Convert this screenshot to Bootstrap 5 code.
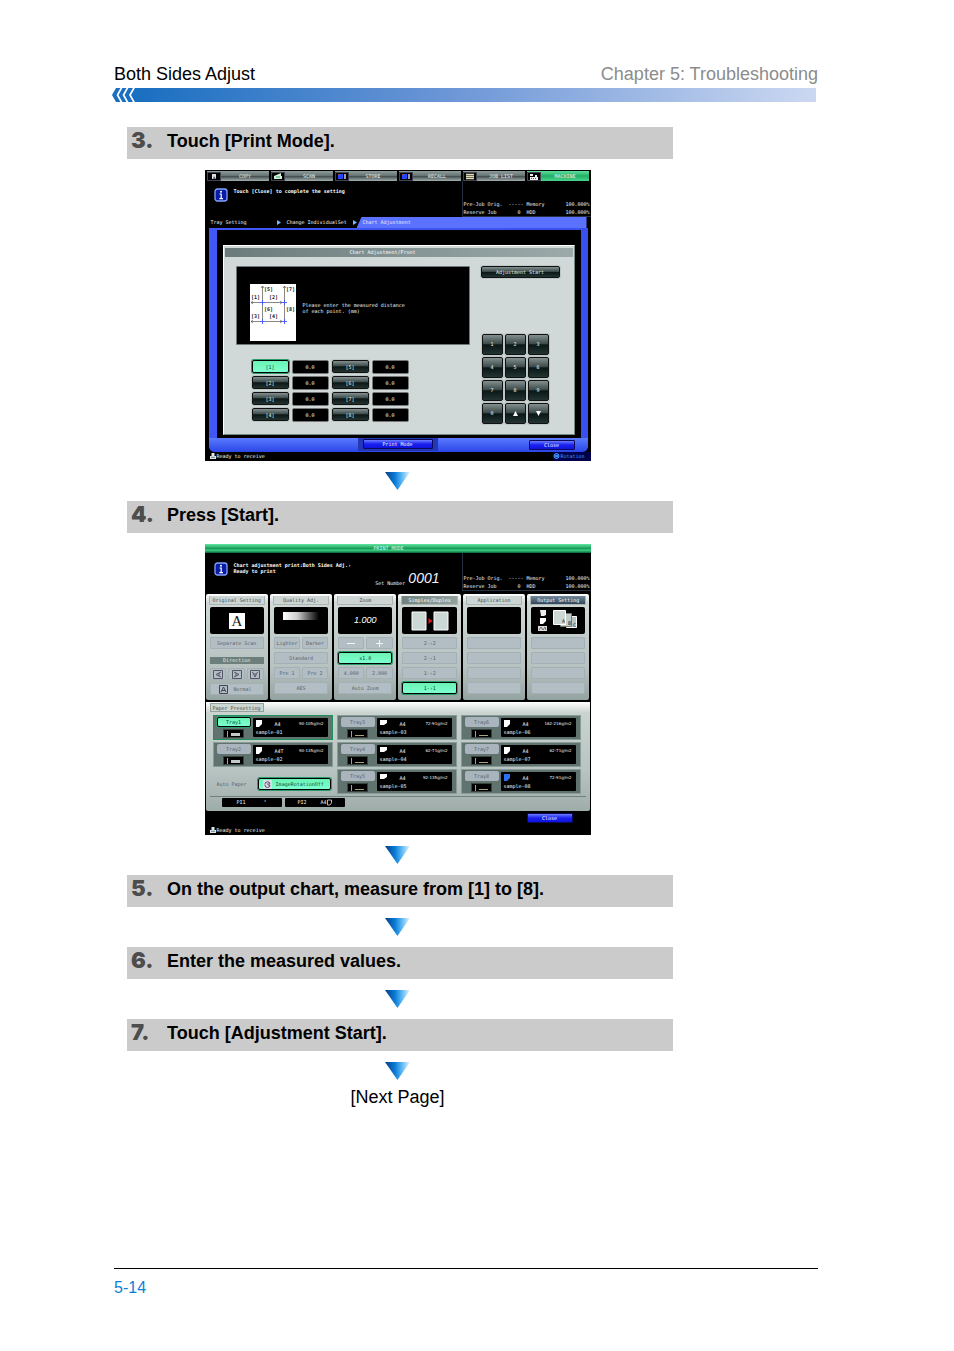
<!DOCTYPE html>
<html lang="en">
<head>
<meta charset="utf-8">
<meta name="viewport" content="width=device-width, initial-scale=1">
<title>Both Sides Adjust</title>
<link rel="stylesheet" href="https://cdn.jsdelivr.net/npm/bootstrap@5.3.0/dist/css/bootstrap.min.css">
<script src="https://cdn.jsdelivr.net/npm/bootstrap@5.3.0/dist/js/bootstrap.bundle.min.js"></script>
<style>
body{font-family:"Liberation Sans",Arial,sans-serif;font-size:18px;line-height:20px;color:#000;background:#fff}
.sheet{padding:64px 136px 0 114px;min-height:100vh}
.chapter{color:#8c8c8c}
.rule-bar{height:14px;margin:4px 2px 25px -2px}
.rule-bar .fade-bar{background:linear-gradient(90deg,#1a6fc1,#6a95d6 45%,#ccd8f1)}
.steps{margin:0 0 0 13px;max-width:546px}
.step-head{background:#cbcbcb;height:32px;font-size:18px;font-weight:700;line-height:29px;padding-left:4px}
.step-no{font-family:Inter,sans-serif;font-weight:900;font-size:22px;line-height:26px;width:36px;color:#4d4d4d}
.mid{padding-right:5px}
.arrow{height:18px;margin:11px 0}
.next{margin-top:-4px}
.foot{border-top:1px solid #000;color:#0a7fd4;font-size:16px;line-height:18px;padding:10px 0 54px}
/* device screens */
.scr{width:386px;background:#000;color:#f2f6f6;font:5px/8px "DejaVu Sans Mono","Liberation Mono",monospace;margin:11px 0 0;white-space:nowrap}
.scr button{font:inherit;color:inherit;border:0;padding:0;margin:0;text-align:center;display:block}
.scr svg{display:block;flex:none}
.tabs{height:11px;padding:1px 2px 0 2px;gap:2px}
.tabs button{flex:1 1 0;height:10px;display:flex;align-items:center;background:linear-gradient(#8f9c9c,#677474 45%,#3b4646 50%,#a3afaf);color:#e6eded}
.tabs button.on{background:linear-gradient(#5ee09a,#24ad68 50%,#49d68c)}
.tabs i{width:14px;height:9px;background:#000;border:1px solid #445;margin-right:1px;display:flex;justify-content:center}
.tabs b{flex:1;font-weight:400}
.info{height:36px;padding-left:9px}
.info.tall{height:38px}
.info>svg{margin-top:7px}
.tall>svg,.info.tall .msg{margin-top:9px}
.msg{margin:7px 0 0 6px;color:#fff;font-weight:700;line-height:6px}
.stat{width:129px;border-left:1px solid #273040;border-bottom:1px solid #273040;padding:0 1px;align-content:end;grid-template-columns:45px 12px 6px 30px 33px;line-height:8px}
.crumbs{height:11px;line-height:11px;padding-left:6px}
.crumb{width:66px}
.crumb-on{background:#5a72ff;color:#e9edff;clip-path:polygon(5px 0,100% 0,100% 100%,0 100%);margin-right:4px;padding-left:6px}
.frame{margin:0 3px 0 4px;background:linear-gradient(90deg,#4058f5,#3a50ee);padding:2px 7px 0 8px;border-radius:0 0 6px 6px}
.inner{background:#000;padding:15px 6px 3px}
.gray{background:#d0d9d8;border:1px solid #fff;border-right-color:#788;border-bottom-color:#788;height:190px;padding:2px 1px}
.ttl{height:9px;line-height:9px;background:linear-gradient(90deg,#6b7b7b,#9caaaa);color:#fff;text-align:center;padding-right:32px}
.area{padding:9px 13px 0 11px}
.left-col{width:234px}
.dark-box{background:#000;border:1px solid #6d7979;border-radius:1px;height:79px;padding:17px 0 0 13px}
.hint{padding:18px 0 0 7px;line-height:6px}
.scr .key{background:linear-gradient(#83908f,#3d4b4b 45%,#0a1716 52%,#223433);border:1px solid #111;border-radius:2px;color:#f0f6f6;box-shadow:0 0 0 1px #87939344}
.key.start{width:79px;height:12px;line-height:10px}
.pts{display:grid;grid-template-columns:37px 37px 37px 37px;column-gap:3px;row-gap:2px;margin:15px 0 0 16px}
.pts>*{height:14px;line-height:12px}
.pts .key,.pts .lit{height:13px}
.pts output{background:#000;border:1px solid #777;border-radius:2px;text-align:center;display:block}
.scr .lit{background:linear-gradient(#6bf3b4,#7dffd0);color:#0b4a32;border:1px solid #000;box-shadow:0 0 0 1px #2b9c6a;border-radius:2px}
.pad{display:grid;grid-template-columns:repeat(3,21px);gap:2px;margin:56px 0 0 1px}
.pad button{height:21px;line-height:19px}
.btm{margin:0 -7px 0 -8px;height:14px;padding:0 13px 0 149px;background:linear-gradient(#5a7bff,#2b45e8);border-radius:0 0 6px 6px}
.well{background:#2337b8;padding:1px 5px 0;height:13px}
.scr .bbtn{background:linear-gradient(#6b7dff,#1a20ef 50%,#1113dc);border:1px solid #0a0a58;border-radius:1px;color:#fff;height:10px;line-height:8px;width:46px}
.scr .bbtn.wide{width:70px}
.btm>.bbtn{margin-top:1px}
.ready{height:9px;padding-left:5px;line-height:8px}
.rotn{background:#00004c;color:#3fa0ff;padding-right:6px}
/* print mode */
.green{height:9px;line-height:9px;text-align:center;padding-right:18px;background:linear-gradient(#5fe8a2,#1b9a58 50%,#36cf80 70%,#0b5e33);color:#dcfbe9;padding-right:18px}
.cols{display:grid;grid-template-columns:repeat(6,1fr);gap:2px;padding:3px 1px 2px}
.colx{background:linear-gradient(#fff,#cfd8d5 8%,#b6c2c0 70%,#93a3a0);height:106px;padding:2px 4px 0;color:#59646a;border-radius:2px}
.colx .lab{height:9px;line-height:9px;margin:0 -1px 2px;text-align:center;background:#ccd5d3;border:1px solid #aab5b4;border-width:0 1px 1px;color:#3d494b}
.colx .lab.dk{background:linear-gradient(90deg,#71837f,#93a19d);color:#fff}
.colx .lab.nv{background:linear-gradient(#73899a,#31465a);color:#fff}
.view{height:27px;background:#000;border-radius:2px;margin-bottom:3px;display:flex;align-items:center;justify-content:center}
.ratio-no{font:italic 9px/9px "Liberation Sans",sans-serif;color:#fff}
.scr .soft{background:#b3bdc4;border-radius:1px;height:12px;line-height:10px;flex:1;width:100%;border:1px solid #a5b0b6}
.soft.nrm{padding-left:8px;gap:6px}
.colx .lit{height:12px;line-height:10px;width:100%}
.rowx{display:flex;gap:2px;margin-bottom:3px}
.dirbar{height:7px;line-height:7px;background:#6d7f7a;color:#e0e9e6;text-align:center;margin:8px 0 4px}
.paper{margin:0 1px;height:109px;background:linear-gradient(#fff,#c9d3d0 10%,#b9c5c2 60%,#9fadaa);padding:1px 4px 0;border-radius:0 0 2px 2px}
.ptab{width:54px;height:9px;line-height:8px;border:1px solid #93a09e;background:#ccd6d3;color:#3d494b;text-align:center}
.trays{display:grid;grid-template-columns:repeat(3,120px);grid-auto-rows:25px;column-gap:4px;row-gap:2px;padding:3px 0 0 3px}
.tray{background:#60736e;border:1px solid #8a9a96;padding:1px 4px 1px 3px;display:flex;justify-content:space-between}
.tray.sel{border-color:#1f8f5d}
.tray button{width:34px;height:10px;line-height:10px;background:#aab4bd;border-radius:2px}
.scr .tray button:not(.lit){color:#59646e}
.tray button.lit{line-height:8px}
.stock{width:21px;height:9px;background:#000;border:1px solid #39443f;margin:2px auto 0;padding:0 3px 0 3px;display:flex;align-items:flex-end;gap:3px}
.stock:before{content:"";width:1px;height:6px;background:#a8a480}
.stock i{flex:1;height:1px;background:#a8a480;margin-bottom:1px}
.stock i.full{height:3px;background:#c4c9c9}
.sheetbox{width:75px;height:19px;background:#000;padding:2px 4px 0 3px;border-radius:1px;line-height:8px;margin-top:1px}
.sheetbox small{font-size:4px;font-family:"DejaVu Sans",sans-serif;margin-left:auto}
.sheetbox em{font-style:normal;margin-left:13px}
.auto{display:flex;align-items:center;color:#59646a;padding:6px 0 0 4px;height:24px}
.scr .rot{width:73px;height:12px;margin-left:11px;display:flex;align-items:center;gap:4px;padding:0 4px}
.pi{border-top:1px solid #71807d;margin:2px 0 0;padding:1px 0 0 12px;display:flex;gap:3px}
.pi span{background:#000;width:60px;height:9px;line-height:9px;padding:0 6px;display:flex;justify-content:space-around;border-radius:1px}
.setno{padding-top:18px;line-height:8px}
.digits{font:italic 14px/14px "Liberation Sans",sans-serif;color:#f0f4ff;margin:0 22px 0 3px}
.closing{height:15px;padding:2px 18px 0 0}
</style>
</head>
<body>
<svg width="0" height="0" class="position-absolute" aria-hidden="true">
 <defs>
  <linearGradient id="ga" x1="0" y1="0" x2="1" y2="0"><stop offset="0" stop-color="#063f86"/><stop offset=".4" stop-color="#0b7bd8"/><stop offset=".65" stop-color="#52b4f2"/><stop offset="1" stop-color="#e6f5ff"/></linearGradient>
  <linearGradient id="gs" x1="0" x2="1"><stop offset="0" stop-color="#fff"/><stop offset=".4" stop-color="#ccc"/><stop offset="1" stop-color="#000"/></linearGradient>
  <symbol id="down" viewBox="0 0 25 18"><path d="M0 0H25L12.500 18Z" fill="url(#ga)"/></symbol>
  <symbol id="inf" viewBox="0 0 14 14"><rect x="1" y="1" width="12" height="12" rx="2.500" fill="#0a1ba8" stroke="#86a4ff" stroke-width="1.300"/><circle cx="7" cy="3.800" r="1" fill="#fff"/><path d="M5.500 6H7.200V10.500M5.300 10.700H9" fill="none" stroke="#fff" stroke-width="1.200"/></symbol>
  <symbol id="prn" viewBox="0 0 6 6"><path d="M1.500 0H4.500V3H6V6H0V3H1.500Z" fill="#dfe6e6"/><path d="M1 4.300H5" stroke="#333" stroke-width=".6"/></symbol>
  <symbol id="pg" viewBox="0 0 6 7"><path d="M0 0H6V4L3 7H0Z"/></symbol>
  <symbol id="pgl" viewBox="0 0 7 6"><path d="M0 0H7V3L4 5H0Z"/></symbol>
 </defs>
</svg>
<div class="sheet d-flex flex-column">
 <header>
  <div class="d-flex justify-content-between"><span>Both Sides Adjust</span><span class="chapter">Chapter 5: Troubleshooting</span></div>
  <div class="rule-bar d-flex"><svg width="25" height="14" viewBox="0 0 25 14"><path d="M4 0H25V14H4L0 7Z" fill="#1a6fc1"/><path d="M10 -1L5.500 7L10 15M16 -1L11.500 7L16 15M22.500 -1L18 7L22.500 15" fill="none" stroke="#fff" stroke-width="1.700"/></svg><div class="fade-bar flex-fill"></div></div>
 </header>
 <main class="steps">
  <div class="step-head d-flex"><span class="step-no">3.</span><span>Touch [Print Mode].</span></div>
  <div class="mid d-flex flex-column align-items-center">
   <figure class="scr">
    <div class="tabs d-flex">
     <button><i><svg width="10" height="8"><path d="M3 1H7V6H3Z" fill="#dde"/><path d="M5 3L7 6H4Z" fill="#567"/></svg></i><b>COPY</b></button>
     <button><i><svg width="10" height="8"><path d="M1 3L8 0V3H9V6H1Z" fill="#d7efdd"/><path d="M3 4H7" stroke="#3a6"/></svg></i><b>SCAN</b></button>
     <button><i><svg width="10" height="8"><path d="M1 1H6V6H1Z" fill="#2545ff"/><path d="M7 1H9V6H7Z" fill="#99a"/><path d="M1 1H3V2H1Z" fill="#d33"/></svg></i><b>STORE</b></button>
     <button><i><svg width="10" height="8"><path d="M1 1H6V6H1Z" fill="#2545ff"/><path d="M7 1H9V6H7Z" fill="#99a"/><path d="M1 1H3V2H1Z" fill="#d33"/></svg></i><b>RECALL</b></button>
     <button><i><svg width="10" height="8"><path d="M1 1.500H9M1 3.500H9M1 5.500H9" stroke="#dedfb8" stroke-width="1.300"/></svg></i><b>JOB LIST</b></button>
     <button class="on"><i><svg width="10" height="8"><path d="M1 1H4V3H1ZM1 4H9V7H1ZM6 2H8V4H6Z" fill="#eee"/><path d="M2 5.500H8" stroke="#555" stroke-dasharray="1 1"/></svg></i><b>MACHINE</b></button>
    </div>
    <div class="info d-flex"><svg width="14" height="14"><use href="#inf"/></svg>
     <div class="msg">Touch [Close] to complete the setting</div>
     <div class="stat d-grid ms-auto"><span>Pre-Job Orig.</span><span class="text-end">-----</span><span></span><span>Memory</span><span class="text-end">100.000%</span><span>Reserve Job</span><span class="text-end">0</span><span></span><span>HDD</span><span class="text-end">100.000%</span></div>
    </div>
    <div class="crumbs d-flex"><span class="crumb">Tray Setting</span><svg width="10" height="11"><path d="M0 3L4 5.500L0 8Z" fill="#7fb2ff"/></svg><span class="crumb">Change IndividualSet</span><svg width="4" height="11"><path d="M0 3L4 5.500L0 8Z" fill="#7fb2ff"/></svg><span class="crumb-on flex-fill">Chart Adjustment</span></div>
    <div class="frame">
     <div class="inner">
      <div class="gray">
       <div class="ttl">Chart Adjustment/Front</div>
       <div class="area d-flex justify-content-between">
        <div class="left-col">
         <div class="dark-box d-flex">
          <svg width="46" height="57" viewBox="0 0 46 57" font-size="5" font-weight="700" fill="#222"><rect width="46" height="57" fill="#fff"/><path d="M12.500 2V38M34.500 2V38M1 18.500H11M15 18.500H32M1 37.500H11M15 37.500H32M11 4L12.500 2L14 4M33 4L34.500 2L36 4M3 17L1 18.500L3 20M30 17L32 18.500L30 20M3 36L1 37.500L3 39M30 36L32 37.500L30 39" fill="none" stroke="#555" stroke-width=".7"/><path d="M10 18.500H15M12.500 16V21M32 18.500H37M34.500 16V21M10 37.500H15M12.500 35V40M32 37.500H37M34.500 35V40" stroke="#4155ff" stroke-width=".9"/><text x="14" y="7">[5]</text><text x="36" y="7">[7]</text><text x="1" y="15">[1]</text><text x="19" y="15">[2]</text><text x="14" y="27">[6]</text><text x="36" y="27">[8]</text><text x="1" y="34">[3]</text><text x="19" y="34">[4]</text></svg>
          <div class="hint">Please enter the measured distance<br>of each point. (mm)</div>
         </div>
         <div class="pts">
          <button class="lit">[1]</button><output>0.0</output><button class="key">[5]</button><output>0.0</output>
          <button class="key">[2]</button><output>0.0</output><button class="key">[6]</button><output>0.0</output>
          <button class="key">[3]</button><output>0.0</output><button class="key">[7]</button><output>0.0</output>
          <button class="key">[4]</button><output>0.0</output><button class="key">[8]</button><output>0.0</output>
         </div>
        </div>
        <div>
         <button class="key start">Adjustment Start</button>
         <div class="pad"><button class="key">1</button><button class="key">2</button><button class="key">3</button><button class="key">4</button><button class="key">5</button><button class="key">6</button><button class="key">7</button><button class="key">8</button><button class="key">9</button><button class="key">0</button><button class="key" aria-label="Up"><svg class="mx-auto" width="5" height="5"><path d="M2.500 0L5 5H0Z" fill="#fff"/></svg></button><button class="key" aria-label="Down"><svg class="mx-auto" width="5" height="5"><path d="M2.500 5L5 0H0Z" fill="#fff"/></svg></button></div>
        </div>
       </div>
      </div>
     </div>
     <div class="btm d-flex justify-content-between"><div class="well"><button class="bbtn wide">Print Mode</button></div><button class="bbtn mt-auto mb-auto">Close</button></div>
    </div>
    <div class="ready d-flex"><svg width="7" height="8"><use href="#prn" y="1" width="6" height="6"/></svg><span>Ready to receive</span><span class="rotn ms-auto d-flex"><svg width="7" height="8"><circle cx="3.500" cy="4" r="2.500" fill="#0b3b99" stroke="#3fa0ff"/><path d="M2 4H5" stroke="#9cf"/></svg>Rotation</span></div>
   </figure>
   <svg class="arrow" width="25" height="18"><use href="#down"/></svg>
  </div>

  <div class="step-head d-flex"><span class="step-no">4.</span><span>Press [Start].</span></div>
  <div class="mid d-flex flex-column align-items-center">
   <figure class="scr">
    <div class="green">PRINT MODE</div>
    <div class="info tall d-flex"><svg width="14" height="14"><use href="#inf"/></svg>
     <div class="msg">Chart adjustment print:Both Sides Adj.›<br>Ready to print</div>
     <div class="d-flex ms-auto setno"><span class="pt-2">Set Number</span><span class="digits">0001</span></div>
     <div class="stat d-grid"><span>Pre-Job Orig.</span><span class="text-end">-----</span><span></span><span>Memory</span><span class="text-end">100.000%</span><span>Reserve Job</span><span class="text-end">0</span><span></span><span>HDD</span><span class="text-end">100.000%</span></div>
    </div>
    <div class="cols">
     <div class="colx"><div class="lab">Original Setting</div><div class="view"><svg width="16" height="16"><rect width="16" height="16" fill="#fff"/><text x="8" y="13" font-family="Liberation Serif,serif" font-size="15" text-anchor="middle" fill="#222">A</text></svg></div>
      <div class="rowx"><button class="soft">Separate Scan</button></div>
      <div class="dirbar">Direction</div>
      <div class="rowx"><button class="soft" aria-label="Left"><svg class="mx-auto" width="10" height="9"><path d="M.5 .5H9.500V8.500H.5ZM8 2L3 4.500L8 7M6 3V6" fill="none" stroke="#556"/></svg></button><button class="soft" aria-label="Right"><svg class="mx-auto" width="10" height="9"><path d="M.5 .5H9.500V8.500H.5ZM2 2L7 4.500L2 7M4 3V6" fill="none" stroke="#556"/></svg></button><button class="soft" aria-label="Down"><svg class="mx-auto" width="10" height="9"><path d="M.5 .5H9.500V8.500H.5ZM2.500 2L5 7L7.500 2M4 4H6" fill="none" stroke="#556"/></svg></button></div>
      <button class="soft nrm d-flex align-items-center"><svg width="9" height="9"><path d="M.5 .5H8.500V8.500H.5ZM2 7L4.500 2L7 7M3 5.500H6" fill="none" stroke="#445"/></svg>Normal</button></div>
     <div class="colx"><div class="lab">Quality Adj.</div><div class="view"><svg width="36" height="18"><rect width="36" height="8" fill="url(#gs)"/></svg></div>
      <div class="rowx"><button class="soft">Lighter</button><button class="soft">Darker</button></div><div class="rowx"><button class="soft">Standard</button></div><div class="rowx"><button class="soft">Pre 1</button><button class="soft">Pre 2</button></div><button class="soft">AES</button></div>
     <div class="colx"><div class="lab">Zoom</div><div class="view"><span class="ratio-no">1.000</span></div>
      <div class="rowx"><button class="soft" aria-label="Minus"><svg class="mx-auto" width="8" height="8"><path d="M0 4.500H8" stroke="#f3f6f7"/></svg></button><button class="soft" aria-label="Plus"><svg class="mx-auto" width="8" height="8"><path d="M1 4.500H8M4.500 1V8" stroke="#f3f6f7"/></svg></button></div><div class="rowx"><button class="lit">x1.0</button></div><div class="rowx"><button class="soft">4.000</button><button class="soft">2.000</button></div><button class="soft">Auto Zoom</button></div>
     <div class="colx"><div class="lab dk">Simplex/Duplex</div><div class="view"><svg width="38" height="20"><path d="M1 1H15V19H1ZM23 1H37V19H23Z" fill="#ccd8d5" stroke="#fff"/><path d="M17.500 7L21.500 10L17.500 13Z" fill="#e01818"/></svg></div>
      <div class="rowx"><button class="soft">2-›2</button></div><div class="rowx"><button class="soft">2-›1</button></div><div class="rowx"><button class="soft">1-›2</button></div><button class="lit">1-›1</button></div>
     <div class="colx"><div class="lab">Application</div><div class="view"></div>
      <div class="rowx"><button class="soft" aria-label="Slot 1"></button></div><div class="rowx"><button class="soft" aria-label="Slot 2"></button></div><div class="rowx"><button class="soft" aria-label="Slot 3"></button></div><button class="soft" aria-label="Slot 4"></button></div>
     <div class="colx"><div class="lab nv">Output Setting</div><div class="view"><svg width="42" height="24"><path d="M3 1H9V6L7 7H4Z" fill="#eee"/><path d="M3 9H9V12L6 15H3Z" fill="#fff"/><path d="M1 17H10V22H1Z" fill="#ddd"/><path d="M2 21L4 18L6 21L8 18L9 21" stroke="#555" fill="none" stroke-width=".8"/><path d="M29.500 7.500H39.500V18.500H29.500Z" fill="#b8c4c1" stroke="#fff"/><path d="M23.500 4.500H34.500V17.500H23.500Z" fill="#c3cecb" stroke="#777"/><path d="M16.500 1.500H28.500V15.500H16.500Z" fill="#cdd7d4" stroke="#fff"/><text x="25" y="14" font-size="5" fill="#222">A</text><text x="31" y="16" font-size="5" fill="#222">B</text><text x="36" y="18" font-size="5" fill="#222">C</text></svg></div>
      <div class="rowx"><button class="soft" aria-label="Slot 1"></button></div><div class="rowx"><button class="soft" aria-label="Slot 2"></button></div><div class="rowx"><button class="soft" aria-label="Slot 3"></button></div><button class="soft" aria-label="Slot 4"></button></div>
    </div>
    <div class="paper">
     <div class="ptab">Paper Presetting</div>
     <div class="trays">
      <div class="tray sel"><div><button class="lit">Tray1</button><div class="stock"><i class="full"></i></div></div><div class="sheetbox"><div class="d-flex"><svg width="6" height="7" fill="#fff"><use href="#pg"/></svg><em>A4</em><small>90-105g/m2</small></div>sample-01</div></div>
      <div class="tray"><div><button>Tray3</button><div class="stock"><i></i></div></div><div class="sheetbox"><div class="d-flex"><svg width="7" height="6" fill="#fff"><use href="#pgl"/></svg><em>A4</em><small>72-91g/m2</small></div>sample-03</div></div>
      <div class="tray"><div><button>Tray6</button><div class="stock"><i></i></div></div><div class="sheetbox"><div class="d-flex"><svg width="6" height="7" fill="#fff"><use href="#pg"/></svg><em>A4</em><small>162-216g/m2</small></div>sample-06</div></div>
      <div class="tray"><div><button>Tray2</button><div class="stock"><i class="full"></i></div></div><div class="sheetbox"><div class="d-flex"><svg width="6" height="7" fill="#fff"><use href="#pg"/></svg><em>A4T</em><small>90-135g/m2</small></div>sample-02</div></div>
      <div class="tray"><div><button>Tray4</button><div class="stock"><i></i></div></div><div class="sheetbox"><div class="d-flex"><svg width="7" height="6" fill="#fff"><use href="#pgl"/></svg><em>A4</em><small>62-71g/m2</small></div>sample-04</div></div>
      <div class="tray"><div><button>Tray7</button><div class="stock"><i></i></div></div><div class="sheetbox"><div class="d-flex"><svg width="6" height="7" fill="#fff"><use href="#pg"/></svg><em>A4</em><small>62-71g/m2</small></div>sample-07</div></div>
      <div class="auto"><span>Auto Paper</span><button class="lit rot"><svg width="9" height="9"><rect width="9" height="9" fill="#dde"/><path d="M2 4.500A2.500 2.500 0 0 1 7 4M7 5A2.500 2.500 0 0 1 2 5M4 4H6V6" stroke="#555" fill="none"/></svg>ImageRotationOff</button></div>
      <div class="tray"><div><button>Tray5</button><div class="stock"><i></i></div></div><div class="sheetbox"><div class="d-flex"><svg width="7" height="6" fill="#fff"><use href="#pgl"/></svg><em>A4</em><small>92-135g/m2</small></div>sample-05</div></div>
      <div class="tray"><div><button>Tray8</button><div class="stock"><i></i></div></div><div class="sheetbox"><div class="d-flex"><svg width="6" height="7" fill="#2c6ff0"><use href="#pg"/></svg><em>A4</em><small>72-91g/m2</small></div>sample-08</div></div>
     </div>
     <div class="pi"><span><b class="fw-normal">PI1</b><b>’</b></span><span><b class="fw-normal">PI2</b><b class="fw-normal d-flex">A4<svg width="5" height="9"><path d="M.5 2H4.500V5L3 7H.5Z" fill="none" stroke="#fff" stroke-width=".7"/></svg></b></span></div>
    </div>
    <div class="closing d-flex justify-content-end"><button class="bbtn">Close</button></div>
    <div class="ready d-flex"><svg width="7" height="8"><use href="#prn" y="1" width="6" height="6"/></svg><span>Ready to receive</span></div>
   </figure>
   <svg class="arrow" width="25" height="18"><use href="#down"/></svg>
  </div>

  <div class="step-head d-flex"><span class="step-no">5.</span><span>On the output chart, measure from [1] to [8].</span></div>
  <div class="mid d-flex justify-content-center"><svg class="arrow" width="25" height="18"><use href="#down"/></svg></div>
  <div class="step-head d-flex"><span class="step-no">6.</span><span>Enter the measured values.</span></div>
  <div class="mid d-flex justify-content-center"><svg class="arrow" width="25" height="18"><use href="#down"/></svg></div>
  <div class="step-head d-flex"><span class="step-no">7.</span><span>Touch [Adjustment Start].</span></div>
  <div class="mid d-flex justify-content-center"><svg class="arrow" width="25" height="18"><use href="#down"/></svg></div>
  <div class="mid next text-center">[Next Page]</div>
 </main>
 <footer class="foot mt-auto">5-14</footer>
</div>
</body>
</html>
